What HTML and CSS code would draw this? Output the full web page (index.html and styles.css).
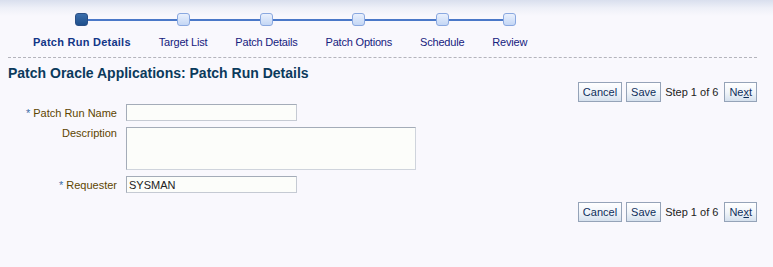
FILE: index.html
```html
<!DOCTYPE html>
<html>
<head>
<meta charset="utf-8">
<link rel="stylesheet" href="styles.css">
</head>
<body>
<div class="page">
  <div class="train">
    <div class="step first current">
      <div class="node-row"><span class="line"></span><span class="node"></span><span class="line"></span></div>
      <div class="label">Patch Run Details</div>
    </div>
    <div class="step">
      <div class="node-row"><span class="line"></span><span class="node"></span><span class="line"></span></div>
      <div class="label">Target List</div>
    </div>
    <div class="step">
      <div class="node-row"><span class="line"></span><span class="node"></span><span class="line"></span></div>
      <div class="label">Patch Details</div>
    </div>
    <div class="step">
      <div class="node-row"><span class="line"></span><span class="node"></span><span class="line"></span></div>
      <div class="label">Patch Options</div>
    </div>
    <div class="step">
      <div class="node-row"><span class="line"></span><span class="node"></span><span class="line"></span></div>
      <div class="label">Schedule</div>
    </div>
    <div class="step last">
      <div class="node-row"><span class="line"></span><span class="node"></span><span class="line"></span></div>
      <div class="label">Review</div>
    </div>
  </div>
  <div class="content">
    <h1 class="title">Patch Oracle Applications: Patch Run Details</h1>
    <div class="actions">
      <button class="btn">Cancel</button>
      <button class="btn">Save</button>
      <span class="stepinfo">Step 1 of 6</span>
      <button class="btn">Ne<u>x</u>t</button>
    </div>
    <div class="form">
      <label class="flabel"><span class="req">*</span> Patch Run Name</label>
      <input class="field" type="text">
      <label class="flabel top">Description</label>
      <textarea class="area"></textarea>
      <label class="flabel"><span class="req">*</span> Requester</label>
      <input class="field" type="text" value="SYSMAN">
    </div>
    <div class="actions bottom">
      <button class="btn">Cancel</button>
      <button class="btn">Save</button>
      <span class="stepinfo">Step 1 of 6</span>
      <button class="btn">Ne<u>x</u>t</button>
    </div>
  </div>
</div>
</body>
</html>
```

FILE: styles.css
```css
html, body {
  margin: 0;
  padding: 0;
}
body {
  background: linear-gradient(to bottom, #d9dfee 0px, #eef0f8 8px, #f9f8fd 16px, #f9f8fd 100%);
  font-family: "Liberation Sans", Arial, sans-serif;
  font-size: 11px;
  width: 773px;
  height: 267px;
  overflow: hidden;
}
.page {
  padding: 0 16px 0 8px;
}
.train {
  display: flex;
  padding-left: 11px;
  padding-top: 13px;
  height: 44px;
  border-bottom: 1px dashed #b4b4bc;
}
.step {
  display: flex;
  flex-direction: column;
  align-items: stretch;
  padding: 0;
}
.node-row {
  display: flex;
  align-items: center;
  height: 13px;
}
.line {
  flex: 1;
  height: 2px;
  background: #4a78c8;
}
.first .line:first-child,
.last .line:last-child {
  background: transparent;
}
.node {
  width: 11px;
  height: 11px;
  border: 1px solid #8aa8e0;
  border-radius: 3px;
  background: linear-gradient(to bottom, #eaf1fd, #c4d6f5);
  flex: none;
}
.current .node {
  border-color: #2a4f86;
  background: linear-gradient(to bottom, #3b6eab, #1e4f8c);
}
.label {
  padding: 10px 14px 0;
  color: #16217e;
  white-space: nowrap;
  text-align: center;
  letter-spacing: -0.2px;
}
.current .label {
  font-weight: bold;
  color: #123687;
  letter-spacing: 0.25px;
}
.content {
  padding-top: 7px;
}
.title {
  margin: 0;
  font-size: 14px;
  font-weight: bold;
  color: #0b3a5c;
  line-height: 17px;
}
.actions {
  display: flex;
  justify-content: flex-end;
  align-items: center;
  gap: 4px;
  margin-top: 0;
  height: 20px;
}
.actions.bottom {
  margin-top: 9px;
}
.btn {
  font-family: inherit;
  font-size: 11px;
  color: #0f2f5c;
  height: 20px;
  padding: 0 4px;
  border: 1px solid #95a3b8;
  border-radius: 0;
  background: linear-gradient(to bottom, #ffffff 0%, #f1f5fa 50%, #d6e1ee 100%);
}
.btn u {
  text-decoration: underline;
}
.stepinfo {
  color: #222;
  margin-right: 2px;
}
.form {
  display: grid;
  grid-template-columns: 109px auto;
  column-gap: 9px;
  row-gap: 6px;
  margin-top: 2px;
  justify-content: start;
  align-items: center;
}
.flabel {
  text-align: right;
  color: #5e4500;
}
.flabel.top {
  align-self: start;
  padding-top: 0;
}
.req {
  color: #3c6ea7;
}
.field {
  box-sizing: border-box;
  width: 171px;
  height: 17px;
  margin: 0;
  border: 1px solid #c5cad3;
  border-top-color: #a4acb8;
  border-left-color: #a4acb8;
  background: #fcfdfa;
  font-family: inherit;
  font-size: 11px;
  color: #222;
  padding: 0 2px;
}
.area {
  box-sizing: border-box;
  width: 290px;
  height: 43px;
  margin: 0;
  border: 1px solid #cfd4dc;
  border-top-color: #a4acb8;
  border-left-color: #a4acb8;
  background: #fcfdfa;
  resize: none;
}
```
